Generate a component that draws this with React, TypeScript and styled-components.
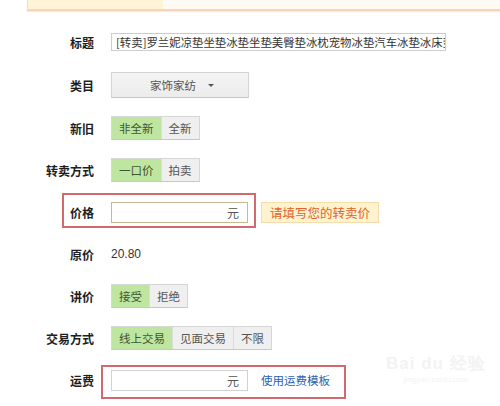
import React from "react";
import styled, { createGlobalStyle } from "styled-components";

const GlobalStyle = createGlobalStyle`
    html, body {
        margin: 0;
        padding: 0;
        background: #ffffff;
        font-family: "Liberation Sans", "Noto Sans CJK SC", sans-serif;
        color: #333333;
    }
`;

const Page = styled.div`
    position: relative;
    width: 500px;
    height: 406px;
    overflow: hidden;
    background: #ffffff;
`;

const Banner = styled.div`
    margin-left: 27px;
    height: 9px;
    display: flex;
    background: #fffaf4;
    border-left: 1px solid #f7dcc2;
    border-bottom: 2px solid #f8d5b6;
    box-shadow: 0 1px 1px #fbe8d6;
`;

const BannerTab = styled.div`
    width: 135px;
    background: #fff4d6;
`;

const Form = styled.div`
    display: flex;
    flex-direction: column;
    gap: 18px;
    padding-top: 19px;
`;

const Row = styled.div`
    position: relative;
    display: flex;
    align-items: center;
    gap: 17px;
    min-height: 24px;
`;

const Label = styled.div`
    width: 94px;
    text-align: right;
    font-family: "Noto Sans CJK SC", sans-serif;
    font-size: 12px;
    font-weight: 700;
    color: #1e1e1e;
    flex-shrink: 0;
`;

const Marker = styled.div<{ $top: number; $bottom: number; $left: number; $right: number }>`
    position: absolute;
    top: ${({ $top }) => -$top}px;
    bottom: ${({ $bottom }) => -$bottom}px;
    left: ${({ $left }) => $left}px;
    right: ${({ $right }) => $right}px;
    border: 2px solid #d06a6e;
    pointer-events: none;
`;

const TitleInput = styled.div`
    width: 335px;
    height: 18px;
    box-sizing: border-box;
    line-height: 16px;
    padding-left: 4px;
    border: 1px solid #cccccc;
    font-family: "Noto Sans CJK SC", sans-serif;
    font-size: 11.4px;
    color: #333333;
    white-space: nowrap;
    overflow: hidden;
`;

const Select = styled.div`
    width: 138px;
    height: 26px;
    box-sizing: border-box;
    display: flex;
    align-items: center;
    justify-content: center;
    gap: 12px;
    padding-left: 4px;
    border: 1px solid #d4d4d4;
    border-bottom-color: #c4c4c4;
    background: linear-gradient(#f4f4f4, #ececec);
    font-family: "Noto Sans CJK SC", sans-serif;
    font-size: 11.5px;
    color: #555555;
`;

const Caret = styled.span`
    width: 0;
    height: 0;
    border-left: 3px solid transparent;
    border-right: 3px solid transparent;
    border-top: 3px solid #555555;
`;

const Toggle = styled.div`
    display: flex;
    height: 24px;
    border: 1px solid #d6d6d6;
    border-bottom-color: #c8c8c8;
    box-sizing: border-box;
`;

const Option = styled.div<{ $active?: boolean }>`
    display: flex;
    align-items: center;
    padding: 0 7px;
    font-family: "Noto Sans CJK SC", sans-serif;
    font-size: 11.5px;
    color: ${({ $active }) => ($active ? "#3f5530" : "#555555")};
    background: ${({ $active }) => ($active ? "#bfe6a0" : "#efefef")};
    border-left: 1px solid ${({ $active }) => ($active ? "#a9d78a" : "#dcdcdc")};
    &:first-child {
        border-left: none;
    }
`;

const MoneyInput = styled.div<{ $warn?: boolean }>`
    width: 137px;
    height: 21px;
    box-sizing: border-box;
    display: flex;
    align-items: center;
    justify-content: flex-end;
    padding-right: 8px;
    border: 1px solid ${({ $warn }) => ($warn ? "#c9b88f" : "#d2d2d2")};
    font-family: "Noto Sans CJK SC", sans-serif;
    font-size: 12px;
    color: #555555;
`;

const Hint = styled.div`
    margin-left: -4px;
    height: 21px;
    box-sizing: border-box;
    display: flex;
    align-items: center;
    padding: 0 8px;
    background: #fff2cf;
    border: 1px solid #f6dcaa;
    font-family: "Noto Sans CJK SC", sans-serif;
    font-size: 12.5px;
    color: #e2632b;
`;

const Price = styled.div`
    font-size: 12px;
    color: #333333;
`;

const Link = styled.a`
    margin-left: -4px;
    font-family: "Noto Sans CJK SC", sans-serif;
    font-size: 11.5px;
    color: #2c5fb3;
    text-decoration: none;
`;

const Watermark = styled.div`
    position: absolute;
    left: 386px;
    top: 352px;
    display: flex;
    flex-direction: column;
    align-items: center;
    color: #f3f3f3;
    font-family: "Liberation Sans", sans-serif;
    pointer-events: none;
`;

const WatermarkLogo = styled.div`
    font-size: 17px;
    font-weight: 700;
    letter-spacing: 1px;
`;

const WatermarkUrl = styled.div`
    font-size: 8px;
`;

const App = () => {
    return (
        <Page>
            <GlobalStyle />
            <Banner>
                <BannerTab />
            </Banner>
            <Form>
                <Row>
                    <Label>标题</Label>
                    <TitleInput>[转卖]罗兰妮凉垫坐垫冰垫坐垫美臀垫冰枕宠物冰垫汽车冰垫冰床垫</TitleInput>
                </Row>
                <Row>
                    <Label>类目</Label>
                    <Select>
                        家饰家纺 <Caret />
                    </Select>
                </Row>
                <Row>
                    <Label>新旧</Label>
                    <Toggle>
                        <Option $active>非全新</Option>
                        <Option>全新</Option>
                    </Toggle>
                </Row>
                <Row>
                    <Label>转卖方式</Label>
                    <Toggle>
                        <Option $active>一口价</Option>
                        <Option>拍卖</Option>
                    </Toggle>
                </Row>
                <Row>
                    <Marker $top={7} $bottom={4} $left={62} $right={244} />
                    <Label>价格</Label>
                    <MoneyInput $warn>元</MoneyInput>
                    <Hint>请填写您的转卖价</Hint>
                </Row>
                <Row>
                    <Label>原价</Label>
                    <Price>20.80</Price>
                </Row>
                <Row>
                    <Label>讲价</Label>
                    <Toggle>
                        <Option $active>接受</Option>
                        <Option>拒绝</Option>
                    </Toggle>
                </Row>
                <Row>
                    <Label>交易方式</Label>
                    <Toggle>
                        <Option $active>线上交易</Option>
                        <Option>见面交易</Option>
                        <Option>不限</Option>
                    </Toggle>
                </Row>
                <Row>
                    <Marker $top={3} $bottom={7} $left={101} $right={154} />
                    <Label>运费</Label>
                    <MoneyInput>元</MoneyInput>
                    <Link>使用运费模板</Link>
                </Row>
            </Form>
            <Watermark>
                <WatermarkLogo>Bai du 经验</WatermarkLogo>
                <WatermarkUrl>jingyan.baidu.com</WatermarkUrl>
            </Watermark>
        </Page>
    );
};

export default App;
